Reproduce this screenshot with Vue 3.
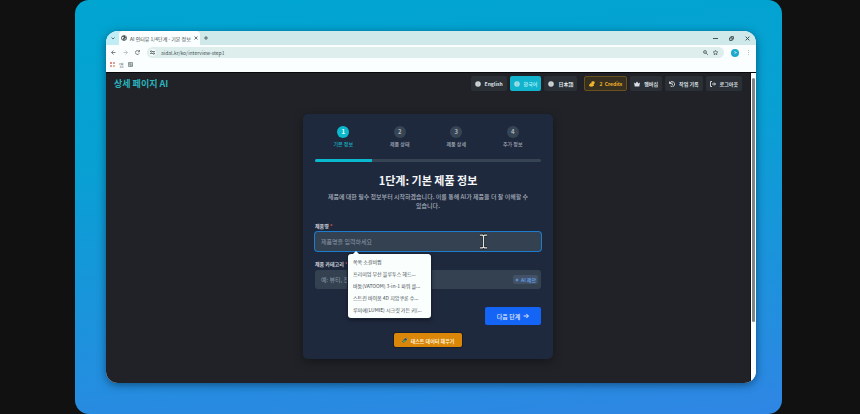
<template>
  <div class="stage">
    <div class="backdrop">
      <div class="browser">
        <div class="tab-strip">
          <button class="tab-search" type="button" aria-label="탭 검색">
            <svg viewBox="0 0 8 8"><path d="M1 3l3 3 3-3" /></svg>
          </button>
          <div class="tab">
            <svg class="globe" viewBox="0 0 12 12"><circle cx="6" cy="6" r="5.5" fill="#3c4649" /><path d="M2 4l3-1 1 2-2 2 1 3-3-2zM8 2l2 2-2 1zM7 7l3-1-1 3-2 1z" fill="#dfe9ea" /></svg>
            <span class="tab-title">AI 인터뷰 1/4단계 - 기본 정보</span>
            <button type="button" aria-label="탭 닫기"><svg viewBox="0 0 8 8"><path d="M1 1l6 6M7 1L1 7" /></svg></button>
          </div>
          <button class="new-tab" type="button" aria-label="새 탭"><svg viewBox="0 0 8 8"><path d="M4 0v8M0 4h8" /></svg></button>
          <div class="window-controls">
            <button type="button" aria-label="최소화"><svg viewBox="0 0 8 8"><path d="M0 4h8" /></svg></button>
            <button type="button" aria-label="이전 크기로"><svg viewBox="0 0 8 8"><path d="M1 3h4v4H1zM3 3V1h4v4H5" /></svg></button>
            <button type="button" aria-label="닫기"><svg viewBox="0 0 8 8"><path d="M1 1l6 6M7 1L1 7" /></svg></button>
          </div>
        </div>

        <div class="toolbar">
          <button type="button" aria-label="뒤로"><svg viewBox="0 0 10 10"><path d="M9 5H1M5 1L1 5l4 4" /></svg></button>
          <button class="dim" type="button" aria-label="앞으로"><svg viewBox="0 0 10 10"><path d="M1 5h8M5 1l4 4-4 4" /></svg></button>
          <button type="button" aria-label="새로고침"><svg viewBox="0 0 10 10"><path d="M8.5 6.5A4 4 0 1 1 8 2.500M9 0v3.500H5.500" /></svg></button>
          <div class="address">
            <span class="site-info"><svg viewBox="0 0 10 10"><path d="M0 3h1M4 3h6M0 7h6M9 7h1" /><circle cx="2.500" cy="3" r="1.500" /><circle cx="7.500" cy="7" r="1.500" /></svg></span>
            <input v-model="url" type="text" aria-label="주소" />
            <svg class="tool" viewBox="0 0 10 10"><circle cx="4" cy="4" r="3" /><path d="M6 6l4 4M2.500 4h3" /></svg>
            <svg class="tool" viewBox="0 0 10 10"><path d="M5 .5l1.400 3 3.200.4-2.400 2.200.6 3.300L5 7.800 2.200 9.400l.6-3.300L.4 3.900l3.200-.4z" /></svg>
          </div>
          <button class="profile" type="button" aria-label="프로필"><svg viewBox="0 0 10 10"><path d="M2 3l5 2-4 2" /></svg></button>
          <button type="button" aria-label="메뉴"><svg viewBox="0 0 10 10"><path d="M5 1v1M5 4.500v1M5 8v1" /></svg></button>
        </div>

        <div class="bookmarks">
          <svg viewBox="0 0 10 10"><path d="M0 0h4v4H0z" fill="#e28b7f" /><path d="M6 0h4v4H6zM0 6h4v4H0z" fill="#d8a39a" /><path d="M6 6h4v4H6z" fill="#eab48f" /></svg>
          <span>앱</span>
          <svg viewBox="0 0 10 10"><path d="M1 1h8v8H1zM1 4h8M4 1v8M4 6.500h5" fill="none" stroke="#566164" stroke-width="1.200" /></svg>
        </div>

        <div class="viewport">
          <div class="page">
            <header class="site-header">
              <a class="brand" href="#">상세 페이지 AI</a>
              <nav>
                <div class="languages">
                  <button v-for="lang in languages" :key="lang" type="button" :class="['nav-button', { active: lang === currentLang }]" @click="currentLang = lang">
                    <svg viewBox="0 0 12 12"><circle cx="6" cy="6" r="5.500" fill="currentColor" /><path d="M1 4h10M1 8h10M6 1v10" class="globe-line" /></svg>{{ lang }}
                  </button>
                </div>
                <a class="nav-button credits" href="#">
                  <svg viewBox="0 0 12 12" fill="currentColor"><ellipse cx="8" cy="3.500" rx="3.500" ry="2.800" /><path d="M3 4l7 3v2L7 11 1 9z" /><ellipse cx="4" cy="8.500" rx="3.500" ry="2.800" /></svg>2 &nbsp;Credits
                </a>
                <a class="nav-button" href="#">
                  <svg viewBox="0 0 12 12" fill="currentColor"><path d="M0 3l3 2 3-4 3 4 3-2-1.500 8h-9z" /></svg>멤버십
                </a>
                <a class="nav-button" href="#">
                  <svg viewBox="0 0 12 12" class="line"><path d="M1 1v4h4M1.500 5A5 5 0 1 1 3 10M6 3.500V7l2 1" /></svg>작업 기록
                </a>
                <a class="nav-button" href="#">
                  <svg viewBox="0 0 12 12" class="line"><path d="M4 1H1v10h3M4 6h7M8 3l3 3-3 3" /></svg>로그아웃
                </a>
              </nav>
            </header>

            <main class="card">
              <ol class="steps">
                <li v-for="(step, i) in steps" :key="step" :class="{ active: i + 1 === currentStep }">
                  <span class="step-number">{{ i + 1 }}</span>
                  <span>{{ step }}</span>
                </li>
              </ol>
              <div class="progress"><div :style="{ width: progress + '%' }"></div></div>

              <h1>1단계: 기본 제품 정보</h1>
              <p class="intro">제품에 대한 필수 정보부터 시작하겠습니다. 이를 통해 AI가 제품을 더 잘 이해할 수 있습니다.</p>

              <form @submit.prevent>
                <div class="field">
                  <label for="product-name">제품명 <em>*</em></label>
                  <div class="control focused">
                    <input id="product-name" v-model="form.name" type="text" placeholder="제품명을 입력하세요" autocomplete="off" />
                    <svg class="text-cursor" viewBox="0 0 10 18"><path d="M1 2h3l1 1 1-1h3M5 3v12M1 16h3l1-1 1 1h3" stroke="#10161d" stroke-width="3" /><path d="M1 2h3l1 1 1-1h3M5 3v12M1 16h3l1-1 1 1h3" stroke="#e3e3df" stroke-width="1.400" /></svg>
                  </div>
                  <ul class="suggestions">
                    <li v-for="item in suggestions" :key="item">{{ item }}</li>
                  </ul>
                </div>
                <div class="field">
                  <label for="category">제품 카테고리 <em>*</em></label>
                  <div class="control">
                    <input id="category" v-model="form.category" type="text" placeholder="예: 뷰티, 전자제품" />
                    <button class="ai-button" type="button">
                      <svg viewBox="0 0 10 10"><path d="M5 0l1.500 3.500L10 5 6.500 6.500 5 10 3.500 6.500 0 5l3.500-1.500z" fill="currentColor" /></svg>AI 제안
                    </button>
                  </div>
                </div>
                <div class="actions">
                  <button class="next" type="submit">다음 단계
                    <svg viewBox="0 0 10 10"><path d="M1 5h8M5.500 1.500L9 5 5.500 8.500" /></svg>
                  </button>
                </div>
              </form>
              <button class="fill-test" type="button" @click="fillTest">
                <svg viewBox="0 0 12 12"><path d="M8 1l3 3-6.500 6.500a2 2 0 0 1-3-3z" fill="#28545a" /><path d="M3.500 6.500h5l-4 4a2 2 0 0 1-3-1z" fill="#55a878" /><path d="M7 1l4 4" stroke="#b9d5cd" /></svg>테스트 데이터 채우기
              </button>
            </main>
          </div>
          <div class="scrollbar"><div></div></div>
        </div>
      </div>
    </div>
  </div>
</template>

<script setup>
import { computed, reactive, ref } from 'vue';

const url = ref('aidal.kr/ko/interview-step1');
const languages = ['English', '한국어', '日本語'];
const currentLang = ref('한국어');

const steps = ['기본 정보', '제품 상태', '제품 상세', '추가 정보'];
const currentStep = ref(1);
const progress = computed(() => (currentStep.value / steps.length) * 100);

const suggestions = [
  '쏙쏙 소갈비찜',
  '프리미엄 무선 블루투스 헤드...',
  '바툼(VATOOM) 3-in-1 파워 클...',
  '스트린 바이옴 4D 지압쿠론 수...',
  '루미에(LUMIE) 시크릿 가든 키(...'
];

const form = reactive({ name: '', category: '' });

function fillTest() {
  form.name = suggestions[0];
  form.category = '식품';
}
</script>

<style>
body { margin: 0; background: #111; }
</style>

<style scoped>
.stage { box-sizing: border-box; min-height: 100vh; display: flex; padding: 0 78px 0 75px; background: #111; color: #d4d8de; font-family: "Noto Sans CJK KR", "Noto Sans", sans-serif; font-size: 6px; line-height: 9px; }
.stage * { box-sizing: border-box; }
button, input { margin: 0; padding: 0; border: 0; background: none; color: inherit; font: inherit; }
button { display: inline-flex; align-items: center; justify-content: center; }
a { color: inherit; text-decoration: none; }
svg { flex: none; display: block; }

.backdrop { flex: 1; min-width: 0; display: flex; padding: 31px 26px 31px 31px; border-radius: 14px; background: linear-gradient(175deg, #00a5d0 0%, #08a0d3 35%, #2f86e4 100%); }
.browser { flex: 1; min-width: 0; display: flex; flex-direction: column; overflow: hidden; border-radius: 12px; background: #fbfefe; box-shadow: 0 2px 8px rgba(0, 40, 70, .6); }

.tab-strip { display: flex; align-items: stretch; height: 14px; background: #cfe8ea; color: #37474b; }
.tab-strip svg { width: 4px; height: 4px; fill: none; stroke: #37474b; stroke-width: 1.500; }
.tab-search { width: 13px; border-radius: 0 0 5px 0; background: #bfecf5; }
.tab { display: flex; align-items: center; gap: 3px; padding: 0 2px; border-radius: 4px 4px 0 0; background: #fbfefe; }
.tab svg.globe { width: 6px; height: 6px; stroke: none; }
.tab-title { white-space: nowrap; font-size: 5px; }
.new-tab { width: 13px; }
.window-controls { display: flex; gap: 11px; margin-left: auto; padding-right: 6px; }
.window-controls svg { width: 5px; height: 5px; }

.toolbar { display: flex; align-items: center; gap: 7px; height: 15px; padding: 0 5px; color: #465255; }
.toolbar svg { width: 5px; height: 5px; fill: none; stroke: currentColor; stroke-width: 1.400; }
.toolbar .dim { color: #a8b3b5; }
.address { flex: 1; min-width: 0; display: flex; align-items: center; gap: 5px; height: 11px; padding: 0 6px 0 2px; border-radius: 6px; background: #deeeed; }
.address input { flex: 1; min-width: 0; outline: 0; font-size: 5px; }
.site-info { padding: 1px; border-radius: 50%; background: #f4fafa; }
.toolbar .profile { width: 8px; height: 8px; border-radius: 50%; background: #1da9cb; color: #d9f7fc; }

.bookmarks { display: flex; align-items: center; gap: 4px; height: 12px; padding: 0 4px 3px; color: #667073; font-size: 5px; }
.bookmarks svg { width: 5px; height: 5px; }

.viewport { flex: 1; display: flex; border-top: 1px solid #07090b; }
.page { flex: 1; min-width: 0; background: #202227; }
.scrollbar { width: 6px; padding: 5px 1px 0; border-left: 1px solid #111; background: #fbfefe; }
.scrollbar div { height: 80%; border-radius: 2px; background: #7f8486; }

.site-header { display: flex; align-items: center; justify-content: space-between; padding: 3px 8px 4px; }
.brand { color: #2ab4bd; font-size: 9px; line-height: 12px; font-weight: 700; }
.site-header nav { display: flex; gap: 3px; }
.languages { display: flex; gap: 3px; margin-right: 4px; }
.nav-button { display: inline-flex; align-items: center; gap: 4px; height: 15px; padding: 0 4px; border-radius: 2px; background: #2b3037; color: #dce0e4; font-size: 5px; font-weight: 700; white-space: nowrap; }
.nav-button svg { width: 6px; height: 6px; }
.nav-button.active { background: #12b3cc; color: #a4edf5; }
.nav-button.credits { border: 1px solid #69511b; background: #373020; color: #f2b52c; }
.globe-line { fill: none; stroke: #2b3037; stroke-width: .5; opacity: .5; }
.line { fill: none; stroke: currentColor; stroke-width: 1.800; }

.card { width: 250px; margin: 19px auto 0; padding: 12px; border-radius: 5px; background: #1f293e; box-shadow: 0 3px 10px rgba(0, 0, 0, .35); text-align: center; }
.steps { display: grid; grid-template-columns: repeat(4, 1fr); margin: 0; padding: 0; list-style: none; color: #a0a8b4; font-size: 5px; line-height: 8px; font-weight: 500; }
.steps li { display: flex; flex-direction: column; align-items: center; gap: 2px; }
.step-number { width: 12px; height: 12px; border-radius: 50%; background: #374454; color: #a9b2bd; font-size: 6px; line-height: 12px; font-weight: 700; }
.steps .active { color: #18aebf; }
.active .step-number { background: #0bb9ce; color: #fff; }
.progress { height: 3px; margin-top: 11px; overflow: hidden; border-radius: 2px; background: #374454; }
.progress div { height: 100%; background: #0bb9ce; }
h1 { margin: 10px 0 4px; color: #f4f6f8; font-size: 11px; line-height: 16px; font-weight: 700; }
.intro { margin: 0 8px; color: #a9b0bb; font-size: 6px; line-height: 9px; font-weight: 500; word-break: keep-all; }

form { margin-top: 11px; text-align: left; }
.field { position: relative; margin-bottom: 8px; }
.field label { display: block; margin-bottom: 2px; color: #d0d5dc; font-size: 5px; font-weight: 700; }
.field em { color: #dc5850; font-style: normal; }
.control { position: relative; display: flex; align-items: center; height: 19px; padding: 0 3px 0 6px; border-radius: 3px; background: #334151; }
.control.focused { box-shadow: 0 0 0 1px #1d7ccc; }
.control input { flex: 1; min-width: 0; outline: 0; color: #e8ecf0; }
.control input::placeholder { color: #8b96a4; opacity: 1; }
.text-cursor { position: absolute; top: 1px; right: 53px; width: 9px; height: 17px; fill: none; }
.ai-button { gap: 2px; height: 9px; padding: 0 2px; border-radius: 2px; background: #435166; color: #62a4ef; font-size: 5px; font-weight: 500; }
.ai-button svg { width: 4px; height: 4px; }
.suggestions { position: absolute; z-index: 2; top: 33px; left: 33px; width: 83px; margin: 0; padding: 2px 0; border-radius: 3px; background: #fafefd; box-shadow: 0 0 0 1px #172233, 0 2px 4px rgba(0, 0, 0, .5); color: #424a50; list-style: none; font-size: 5px; line-height: 12px; }
.suggestions::before { content: ""; position: absolute; top: -3px; left: 5px; border: solid transparent; border-width: 0 3px 3px; border-bottom-color: #fafefd; }
.suggestions li { padding: 0 5px; white-space: nowrap; }
.actions { display: flex; justify-content: flex-end; margin-top: 18px; }
.next { gap: 3px; width: 56px; height: 18px; border-radius: 2px; background: #1464f5; color: #e5efff; font-weight: 500; }
.next svg { width: 6px; height: 6px; fill: none; stroke: currentColor; stroke-width: 1.600; }
.fill-test { gap: 3px; height: 14px; margin-top: 8px; padding: 0 8px; border-radius: 2px; background: #d98609; box-shadow: 0 0 0 1px #172031; color: #fff0cf; font-size: 5px; font-weight: 700; }
.fill-test svg { width: 6px; height: 6px; }
</style>
